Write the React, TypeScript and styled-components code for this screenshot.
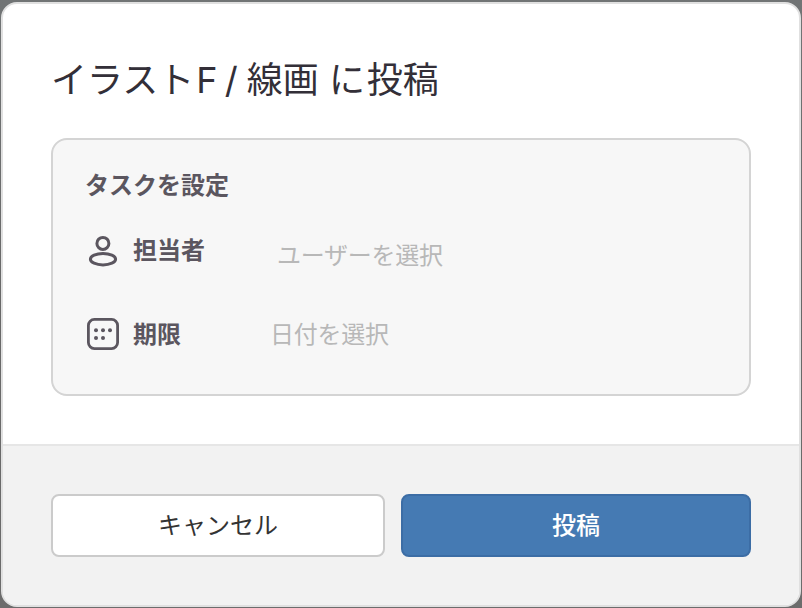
import React from "react";
import styled, { createGlobalStyle } from "styled-components";

const GlobalStyle = createGlobalStyle`
  *, *::before, *::after { box-sizing: border-box; }
  html, body { margin: 0; height: 100%; overflow: hidden; }
  body {
    background: linear-gradient(180deg, #717475 0%, #686868 50%, #6c6c6c 100%);
    font-family: Inter, "Noto Sans CJK JP", sans-serif;
    color: #332f38;
  }
`;

const Overlay = styled.div`
  width: 802px;
  height: 608px;
  padding: 2px 1px 1px;
`;

const Dialog = styled.section`
  display: flex;
  flex-direction: column;
  width: 800px;
  height: 605px;
  border: 2px solid #e0e0e0;
  border-radius: 16px;
  background: #fff;
  overflow: hidden;
`;

const Body = styled.div`
  flex: 1;
  padding: 49px 48px 0;
`;

const Title = styled.h1`
  margin: 0;
  height: 54px;
  font-size: 36px;
  font-weight: 400;
  line-height: 54px;
  white-space: nowrap;
`;

const Initial = styled.span`
  margin-left: 2px;
  letter-spacing: -1.5px;
`;

const Slash = styled.span`
  letter-spacing: -0.5px;
`;

const Particle = styled.span`
  letter-spacing: 1.8px;
`;

const Panel = styled.div`
  height: 258px;
  margin-top: 31px;
  padding: 28px 33px;
  border: 2px solid #d4d4d4;
  border-radius: 16px;
  background: #f7f7f7;
  color: #5b565f;
`;

const PanelTitle = styled.h2`
  margin: 0 0 0 -1px;
  height: 36px;
  font-size: 24px;
  font-weight: 700;
  line-height: 36px;
`;

const Field = styled.div<{ $top: number; $gap: number }>`
  display: grid;
  grid-template-columns: 34px 100px auto;
  column-gap: 13px;
  align-items: center;
  height: 36px;
  margin-top: ${(p) => p.$top}px;

  & > :last-child {
    margin-left: ${(p) => p.$gap}px;
  }
`;

const Label = styled.span<{ $drop?: number }>`
  padding-top: ${(p) => p.$drop ?? 0}px;
  font-size: 24px;
  font-weight: 700;
  line-height: 36px;
`;

const Placeholder = styled.span<{ $drop?: number }>`
  padding-top: ${(p) => p.$drop ?? 0}px;
  color: #b8b8b8;
  font-size: 24px;
  letter-spacing: -0.25px;
  line-height: 36px;
  white-space: nowrap;
`;

const Icon = styled.svg`
  display: block;
  width: 34px;
  height: 34px;
`;

const Footer = styled.footer`
  display: grid;
  grid-template-columns: 334px 350px;
  gap: 16px;
  height: 161px;
  padding: 48px;
  border-top: 2px solid #e6e6e6;
  background: #f2f2f2;
`;

const Button = styled.button<{ $primary?: boolean }>`
  height: 63px;
  padding: 0;
  border: 2px solid ${(p) => (p.$primary ? "#3c6da5" : "#cbcbcb")};
  border-radius: 8px;
  background: ${(p) => (p.$primary ? "#457ab3" : "#fff")};
  color: ${(p) => (p.$primary ? "#fff" : "#333")};
  font-family: inherit;
  font-size: 24px;
  font-weight: ${(p) => (p.$primary ? 500 : 400)};
  line-height: 36px;
`;

const UserIcon = () => (
  <Icon viewBox="0 0 34 34" fill="none" stroke="currentColor" strokeWidth="3">
    <circle cx="16.9" cy="9.4" r="6" />
    <ellipse cx="17" cy="25.2" rx="12.6" ry="5.7" />
  </Icon>
);

const CalendarIcon = () => (
  <Icon viewBox="0 0 34 34" fill="currentColor">
    <rect x="2.4" y="2.4" width="29.2" height="29.2" rx="6" fill="none" stroke="currentColor" strokeWidth="2.8" />
    <circle cx="10" cy="13.2" r="2" />
    <circle cx="17" cy="13.2" r="2" />
    <circle cx="24" cy="13.2" r="2" />
    <circle cx="10" cy="21.1" r="2" />
    <circle cx="17" cy="21.1" r="2" />
  </Icon>
);

export default function App() {
  return (
    <>
      <GlobalStyle />
      <Overlay>
        <Dialog role="dialog">
          <Body>
            <Title>
              イラスト<Initial>F </Initial><Slash>/ </Slash>線画 <Particle>に</Particle>投稿
            </Title>
            <Panel>
              <PanelTitle>タスクを設定</PanelTitle>
              <Field $top={24} $gap={31}>
                <UserIcon />
                <Label>担当者</Label>
                <Placeholder $drop={10}>ユーザーを選択</Placeholder>
              </Field>
              <Field $top={51} $gap={24}>
                <CalendarIcon />
                <Label $drop={2}>期限</Label>
                <Placeholder $drop={2}>日付を選択</Placeholder>
              </Field>
            </Panel>
          </Body>
          <Footer>
            <Button type="button">キャンセル</Button>
            <Button type="button" $primary>投稿</Button>
          </Footer>
        </Dialog>
      </Overlay>
    </>
  );
}
